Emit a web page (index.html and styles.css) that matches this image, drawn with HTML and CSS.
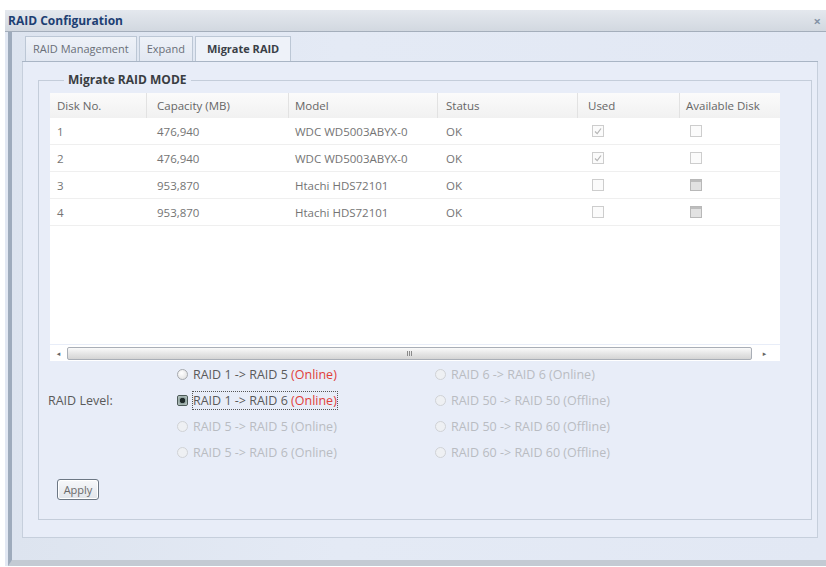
FILE: index.html
```html
<!DOCTYPE html>
<html>
<head>
<meta charset="utf-8">
<link rel="stylesheet" href="styles.css">
</head>
<body>
<div class="window">
  <div class="titlebar">
    <span class="title">RAID Configuration</span>
    <span class="close">×</span>
  </div>
  <div class="wbody">
    <div class="tabs">
      <div class="tab">RAID Management</div>
      <div class="tab">Expand</div>
      <div class="tab active">Migrate RAID</div>
    </div>
    <div class="panel">
      <fieldset class="fs">
        <legend>Migrate RAID MODE</legend>
        <div class="grid">
          <div class="ghead">
            <div class="c c1">Disk No.</div>
            <div class="c c2">Capacity (MB)</div>
            <div class="c c3">Model</div>
            <div class="c c4">Status</div>
            <div class="c c5">Used</div>
            <div class="c c6 last">Available Disk</div>
          </div>
          <div class="gbody">
            <div class="row">
              <div class="c c1">1</div>
              <div class="c c2">476,940</div>
              <div class="c c3">WDC WD5003ABYX-0</div>
              <div class="c c4">OK</div>
              <div class="c c5 chk"><span class="cb on"><svg viewBox="0 0 10 10"><path d="M2 5.5 L4.2 7.6 L8 2.5" fill="none" stroke="#b5b5b5" stroke-width="1.2"/></svg></span></div>
              <div class="c c6 chk"><span class="cb"></span></div>
            </div>
            <div class="row">
              <div class="c c1">2</div>
              <div class="c c2">476,940</div>
              <div class="c c3">WDC WD5003ABYX-0</div>
              <div class="c c4">OK</div>
              <div class="c c5 chk"><span class="cb on"><svg viewBox="0 0 10 10"><path d="M2 5.5 L4.2 7.6 L8 2.5" fill="none" stroke="#b5b5b5" stroke-width="1.2"/></svg></span></div>
              <div class="c c6 chk"><span class="cb"></span></div>
            </div>
            <div class="row">
              <div class="c c1">3</div>
              <div class="c c2">953,870</div>
              <div class="c c3">Htachi HDS72101</div>
              <div class="c c4">OK</div>
              <div class="c c5 chk"><span class="cb"></span></div>
              <div class="c c6 chk"><span class="cb dark"></span></div>
            </div>
            <div class="row">
              <div class="c c1">4</div>
              <div class="c c2">953,870</div>
              <div class="c c3">Htachi HDS72101</div>
              <div class="c c4">OK</div>
              <div class="c c5 chk"><span class="cb"></span></div>
              <div class="c c6 chk"><span class="cb dark"></span></div>
            </div>
          </div>
          <div class="hscroll">
            <span class="arrow">◂</span>
            <div class="track"><span class="grip"></span></div>
            <span class="arrow">▸</span>
          </div>
        </div>
        <div class="levels">
          <div class="lvl-label">RAID Level:</div>
          <div class="opt col1 r1"><span class="radio"></span><span>RAID 1 -&gt; RAID 5 <span class="red">(Online)</span></span></div>
          <div class="opt col2 r1 dis"><span class="radio"></span><span>RAID 6 -&gt; RAID 6 (Online)</span></div>
          <div class="opt col1 r2 sel"><span class="radio"></span><span class="focus">RAID 1 -&gt; RAID 6 <span class="red">(Online)</span></span></div>
          <div class="opt col2 r2 dis"><span class="radio"></span><span>RAID 50 -&gt; RAID 50 (Offline)</span></div>
          <div class="opt col1 r3 dis"><span class="radio"></span><span>RAID 5 -&gt; RAID 5 (Online)</span></div>
          <div class="opt col2 r3 dis"><span class="radio"></span><span>RAID 50 -&gt; RAID 60 (Offline)</span></div>
          <div class="opt col1 r4 dis"><span class="radio"></span><span>RAID 5 -&gt; RAID 6 (Online)</span></div>
          <div class="opt col2 r4 dis"><span class="radio"></span><span>RAID 60 -&gt; RAID 60 (Offline)</span></div>
        </div>
        <button class="apply">Apply</button>
      </fieldset>
    </div>
  </div>
</div>
</body>
</html>
```
FILE: styles.css
```css
html, body {
  margin: 0;
  padding: 0;
  background: #ffffff;
  overflow: hidden;
  font-family: "Open Sans", "DejaVu Sans", sans-serif;
  font-size: 11.5px;
  color: #707070;
}
.window {
  margin: 10px 0 0 5px;
  width: 821px;
  background: #e2e8f3;
}
.titlebar {
  height: 21px;
  display: flex;
  align-items: center;
  justify-content: space-between;
  padding: 0 5px 0 3px;
  background: linear-gradient(#e4e8ee, #d2d8e0);
  border-bottom: 1px solid #a4aebb;
}
.title {
  font-weight: bold;
  font-size: 12px;
  color: #1d3f73;
}
.close {
  color: #8393a6;
  font-size: 13px;
  font-weight: bold;
}
.wbody {
  margin-left: 3px;
  border-left: 4px solid #9eabbc;
  padding: 4px 0 22px 0;
  background: linear-gradient(90deg, #dde4ef, #e4eaf5 40%, #e2e8f4);
  border-bottom: 6px solid #c3cad3;
}
.tabs {
  display: flex;
  gap: 2px;
  margin: 0 8px 0 10px;
  padding-left: 3px;
  border-bottom: 1px solid #a9b5c5;
}
.tab {
  height: 24px;
  line-height: 24px;
  padding: 0 7px;
  border: 1px solid #bcc7d5;
  border-bottom: none;
  background: linear-gradient(#eef2f8, #e2e8f2);
  color: #6a6f78;
  font-size: 11px;
}
.tab.active {
  background: #eef2f9;
  font-weight: bold;
  color: #3a3f47;
  padding: 0 11px;
}
.panel {
  margin: 0 8px 0 10px;
  padding: 10px 5px 17px 15px;
  background: #e8edf8;
  border: 1px solid #c6cfdc;
  border-top: none;
}
.fs {
  margin: 0;
  padding: 5px 20px 19px 11px;
  border: 1px solid #c4cdda;
}
.fs legend {
  font-weight: bold;
  font-size: 12px;
  line-height: 16px;
  color: #3a3d42;
  padding: 0 4px;
  margin-left: 14px;
}
.grid {
  width: 730px;
}
.ghead {
  display: flex;
  height: 25px;
  background: linear-gradient(#fbfbfb, #f1f1f1);
  color: #666;
}
.ghead .c {
  line-height: 25px;
  border-right: 1px solid #e2e2e2;
}
.ghead .c.last {
  border-right: none;
}
.c {
  box-sizing: border-box;
  padding-left: 7px;
  white-space: nowrap;
  overflow: hidden;
}
.c1 { width: 97px; }
.c2 { width: 142px; padding-left: 10px; }
.c3 { width: 149px; padding-left: 6px; }
.c4 { width: 140px; padding-left: 8px; }
.c5 { width: 102px; padding-left: 10px; }
.c6 { width: 100px; padding-left: 6px; }
.gbody {
  height: 226px;
  background: #ffffff;
}
.row {
  display: flex;
  height: 27px;
  line-height: 27px;
  border-bottom: 1px solid #efefef;
  box-sizing: border-box;
  color: #747474;
}
.chk {
  display: flex;
  align-items: center;
}
.c5.chk { padding-left: 14px; }
.c6.chk { padding-left: 10px; }
.cb {
  width: 10px;
  height: 10px;
  border: 1px solid #cdcdcd;
  background: #fbfbfb;
  display: block;
}
.cb svg {
  display: block;
  width: 10px;
  height: 10px;
}
.cb.dark {
  border-color: #b8b8b8;
  background: linear-gradient(#bdbdbd 0 2px, #e2e2e2 2px);
}
.hscroll {
  height: 16px;
  display: flex;
  align-items: center;
  background: #ffffff;
  margin-top: 1px;
}
.arrow {
  width: 17px;
  font-size: 7px;
  color: #666;
  text-align: center;
}
.track {
  flex: 1;
  height: 11px;
  margin: 0 5px 0 0;
  border: 1px solid #a9aeb6;
  border-radius: 2px;
  background: linear-gradient(#fafafa, #e6e6e6 50%, #d4d4d4);
  display: flex;
  justify-content: center;
  align-items: center;
}
.grip {
  width: 5px;
  height: 5px;
  background: repeating-linear-gradient(90deg, #8a8a8a 0 1px, transparent 1px 2px);
}
.hscroll .arrow:last-child {
  width: 15px;
  margin-right: 8px;
}
.levels {
  display: grid;
  grid-template-columns: 129px 258px auto;
  grid-template-rows: repeat(4, 26px);
  margin-left: -2px;
}
.lvl-label {
  grid-column: 1;
  grid-row: 2;
  align-self: center;
  color: #5a5a5a;
  font-size: 12.5px;
}
.opt {
  display: flex;
  align-items: center;
  gap: 5px;
  color: #5a5a5a;
  white-space: nowrap;
  font-size: 12.5px;
}
.col1 { grid-column: 2; }
.col2 { grid-column: 3; }
.r1 { grid-row: 1; }
.r2 { grid-row: 2; }
.r3 { grid-row: 3; }
.r4 { grid-row: 4; }
.opt.dis { color: #b9bcc2; }
.red { color: #e0403a; }
.radio {
  width: 9px;
  height: 9px;
  border-radius: 50%;
  border: 1px solid #a6a9ae;
  background: radial-gradient(circle at 40% 35%, #ffffff, #dcdcdc);
  flex: none;
}
.opt.dis .radio {
  border-color: #d0d2d6;
  background: #eef0f3;
}
.opt.sel .radio {
  border-radius: 2px;
  border-color: #4c5a58;
  background: radial-gradient(circle, #1f2a2a 0 2.5px, #8fa29e 3px, #c6d1cf);
}
.focus {
  outline: 1px dotted #555;
  outline-offset: 0;
}
.apply {
  display: block;
  margin: 14px 0 0 7px;
  width: 42px;
  height: 21px;
  padding: 0;
  font-family: "Open Sans", "DejaVu Sans", sans-serif;
  font-size: 11px;
  color: #6a6a6a;
  border: 1px solid #6c7784;
  border-radius: 3px;
  background: linear-gradient(#f7f8fa, #e1e5eb);
  box-shadow: inset 0 0 0 1px #ffffff;
}
```
